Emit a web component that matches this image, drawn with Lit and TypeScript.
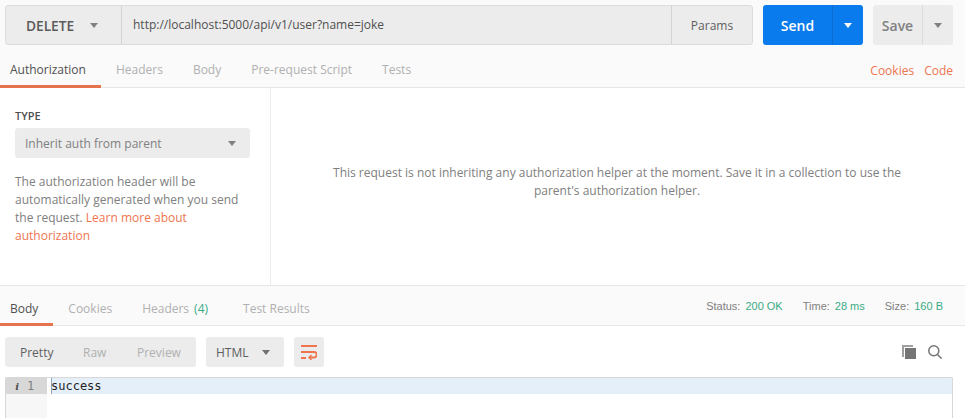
import { LitElement, html, css } from "lit";
import { customElement } from "lit/decorators.js";

const caret = (color: string) => html`<svg class="caret" width="8" height="5" viewBox="0 0 8 5"><path d="M0 0H8L4 5Z" fill=${color}></path></svg>`;

@customElement("app-root")
export class AppRoot extends LitElement {
  static styles = css`
    :host { display: block; width: 965px; height: 418px; overflow: hidden; background: #fafafa; font-family: "Open Sans", sans-serif; font-size: 12px; color: #808080; }
    .caret { display: block; flex: none; }
    .top { display: flex; padding: 5px 12px 0 5px; height: 40px; box-sizing: content-box; }
    .urlgroup { display: flex; width: 748px; height: 40px; box-sizing: border-box; border: 1px solid #dcdcdc; border-radius: 3px; background: #ececec; }
    .method { width: 116px; display: flex; align-items: center; gap: 16px; padding-left: 20px; box-sizing: border-box; border-right: 1px solid #d4d4d4; font-size: 13.7px; font-weight: 600; color: #5a5a5a; }
    .url { flex: 1; display: flex; align-items: center; padding-left: 11px; padding-bottom: 2px; box-sizing: border-box; font-size: 12px; color: #505050; }
    .params { width: 81px; box-sizing: border-box; border-left: 1px solid #d4d4d4; display: flex; align-items: center; justify-content: center; color: #606060; }
    .send { margin-left: 10px; display: flex; width: 100px; height: 40px; background: #097bed; border-radius: 3px; color: #fff; font-size: 14px; font-weight: 600; }
    .send .label { width: 69px; display: flex; align-items: center; justify-content: center; border-right: 1px solid #0a6cd0; }
    .send .arrow, .save .arrow { flex: 1; display: flex; align-items: center; justify-content: center; }
    .save { margin-left: 10px; display: flex; width: 80px; height: 40px; background: #ececec; border-radius: 3px; color: #808080; font-size: 14px; font-weight: 600; }
    .save .label { width: 49px; display: flex; align-items: center; justify-content: center; border-right: 1px solid #dcdcdc; }
    .tabs { display: flex; height: 43px; box-sizing: border-box; border-bottom: 1px solid #e6e6e6; align-items: stretch; }
    .tab { display: flex; align-items: center; padding: 8px 15px 0; color: #b0b0b0; box-sizing: border-box; height: 43px; border-bottom: 3px solid transparent; }
    .tab:first-child { padding-left: 10px; }
    .tab.active { color: #505050; border-bottom-color: #e5734d; }
    .spacer { flex: 1; }
    .links { display: flex; gap: 10px; align-items: center; padding: 9px 12px 0 0; color: #ee7550; }
    .aux { display: flex; height: 197px; background: #fff; box-sizing: border-box; }
    .auth { width: 271px; box-sizing: border-box; border-right: 1px solid #ececec; padding: 19px 20px 0 15px; }
    .typelabel { font-size: 11px; font-weight: 600; color: #505050; line-height: 18px; height: 21px; }
    .select { width: 235px; height: 30px; background: #ececec; border-radius: 3px; display: flex; align-items: center; justify-content: space-between; padding: 0 14px 0 10px; box-sizing: border-box; color: #808080; }
    .help { margin: 15px 0 0; line-height: 18px; color: #808080; white-space: nowrap; }
    .help span { color: #ee7550; }
    .msg { flex: 1; text-align: center; line-height: 18px; padding: 76px 2px 0 0; }
    .msg div { white-space: nowrap; }
    .restop { height: 41px; box-sizing: border-box; border-top: 1px solid #e6e6e6; border-bottom: 1px solid #e6e6e6; display: flex; }
    .restop .tab { height: 40px; padding-top: 7px; }
    .badge { color: #3bab85; margin-left: 5px; }
    .tab.extra { margin-right: 5px; }
    .stats { display: flex; gap: 20px; padding: 0 22px 0 0; align-items: center; font-family: "Liberation Sans", sans-serif; font-size: 11px; color: #808080; }
    .stats b { font-weight: 400; color: #3bab85; margin-left: 5px; }
    .body { background: #fff; height: 92px; padding: 11px 0 0 5px; box-sizing: border-box; position: relative; }
    .bar { display: flex; height: 30px; align-items: stretch; }
    .seg { width: 191px; background: #ececec; border-radius: 3px; display: flex; align-items: center; padding-left: 15px; box-sizing: border-box; color: #b0b0b0; }
    .seg span:first-child { color: #606060; width: 63px; }
    .seg span:nth-child(2) { width: 54px; }
    .fmt { margin-left: 10px; width: 78px; background: #ececec; border-radius: 3px; display: flex; align-items: center; gap: 13px; padding-left: 10px; box-sizing: border-box; color: #606060; }
    .wrap { margin-left: 10px; width: 30px; background: #ececec; border-radius: 3px; display: flex; align-items: center; justify-content: center; }
    .tools { margin-left: auto; margin-right: 23px; display: flex; align-items: center; gap: 12px; }
    .tools svg { display: block; }
    .code { position: absolute; left: 5px; top: 51px; width: 948px; height: 41px; box-sizing: border-box; border: 1px solid #d8d8d8; border-bottom: 0; border-radius: 2px 2px 0 0; display: flex; }
    .gutter { width: 41px; background: #f7f7f7; flex: none; }
    .gnum { height: 16px; background: #d8d8d8; display: flex; align-items: center; color: #808080; font-family: "DejaVu Sans Mono", monospace; font-size: 12px; }
    .gnum i { width: 13px; text-align: right; font-family: "DejaVu Serif", serif; font-size: 10px; font-weight: 700; color: #505050; }
    .gnum span { margin-left: 8px; }
    .line { flex: 1; height: 16px; background: #e5effa; font-family: "DejaVu Sans Mono", monospace; font-size: 12px; line-height: 16px; color: #222; box-shadow: inset 1px 0 0 #8ea2b8; margin-left: 4px; }
  `;

  render() {
    return html`
      <div class="top">
        <div class="urlgroup">
          <div class="method">DELETE ${caret("#808080")}</div>
          <div class="url">http://localhost:5000/api/v1/user?name=joke</div>
          <div class="params">Params</div>
        </div>
        <div class="send"><div class="label">Send</div><div class="arrow">${caret("#fff")}</div></div>
        <div class="save"><div class="label">Save</div><div class="arrow">${caret("#808080")}</div></div>
      </div>
      <div class="tabs">
        <div class="tab active">Authorization</div>
        <div class="tab">Headers</div>
        <div class="tab">Body</div>
        <div class="tab">Pre-request Script</div>
        <div class="tab">Tests</div>
        <div class="spacer"></div>
        <div class="links"><span>Cookies</span><span>Code</span></div>
      </div>
      <div class="aux">
        <div class="auth">
          <div class="typelabel">TYPE</div>
          <div class="select"><span>Inherit auth from parent</span>${caret("#808080")}</div>
          <p class="help">The authorization header will be<br />automatically generated when you send<br />the request. <span>Learn more about<br />authorization</span></p>
        </div>
        <div class="msg">
          <div>This request is not inheriting any authorization helper at the moment. Save it in a collection to use the</div>
          <div>parent's authorization helper.</div>
        </div>
      </div>
      <div class="restop">
        <div class="tab active">Body</div>
        <div class="tab">Cookies</div>
        <div class="tab extra">Headers<span class="badge">(4)</span></div>
        <div class="tab">Test Results</div>
        <div class="spacer"></div>
        <div class="stats">
          <span>Status:<b>200 OK</b></span><span>Time:<b>28 ms</b></span><span>Size:<b>160 B</b></span>
        </div>
      </div>
      <div class="body">
        <div class="bar">
          <div class="seg"><span>Pretty</span><span>Raw</span><span>Preview</span></div>
          <div class="fmt">HTML ${caret("#707070")}</div>
          <div class="wrap">
            <svg width="16" height="15" viewBox="0 0 16 15" fill="none" stroke="#ee7550" stroke-width="1.8">
              <path d="M0 1H16M0 7H13C16.5 7 16.5 12.5 13 12.5H8M0 13H5"></path>
              <path d="M10.5 10L8 12.5L10.5 15" stroke-width="1.4"></path>
            </svg>
          </div>
          <div class="tools">
            <svg width="14" height="14" viewBox="0 0 14 14">
              <path d="M0 0H11V2H2V12H0Z" fill="#a0a0a0"></path>
              <rect x="3" y="3" width="11" height="11" fill="#757575"></rect>
            </svg>
            <svg width="14" height="14" viewBox="0 0 14 14" fill="none" stroke="#757575" stroke-width="1.5">
              <circle cx="5.8" cy="5.8" r="5"></circle>
              <path d="M9.5 9.5L13.6 13.6"></path>
            </svg>
          </div>
        </div>
        <div class="code">
          <div class="gutter"><div class="gnum"><i>i</i><span>1</span></div></div>
          <div class="line">success</div>
        </div>
      </div>
    `;
  }
}
